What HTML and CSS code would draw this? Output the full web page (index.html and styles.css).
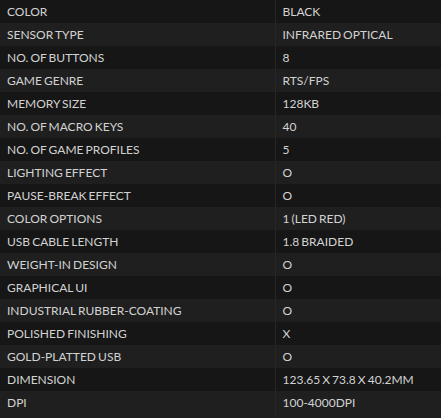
FILE: index.html
```html
<!DOCTYPE html>
<html>
<head>
    <title>Specifications</title>
    <link rel="stylesheet" href="styles.css">
</head>
<body>
    <table class="specs">
        <tr><td>Color</td><td>Black</td></tr>
        <tr><td>Sensor type</td><td>Infrared optical</td></tr>
        <tr><td>No. of buttons</td><td>8</td></tr>
        <tr><td>Game genre</td><td>RTS/FPS</td></tr>
        <tr><td>Memory size</td><td>128KB</td></tr>
        <tr><td>No. of macro keys</td><td>40</td></tr>
        <tr><td>No. of game profiles</td><td>5</td></tr>
        <tr><td>Lighting effect</td><td>O</td></tr>
        <tr><td>Pause-break effect</td><td>O</td></tr>
        <tr><td>Color options</td><td>1 (LED red)</td></tr>
        <tr><td>USB cable length</td><td>1.8 braided</td></tr>
        <tr><td>Weight-in design</td><td>O</td></tr>
        <tr><td>Graphical UI</td><td>O</td></tr>
        <tr><td>Industrial rubber-coating</td><td>O</td></tr>
        <tr><td>Polished finishing</td><td>X</td></tr>
        <tr><td>Gold-platted USB</td><td>O</td></tr>
        <tr><td>Dimension</td><td>123.65 x 73.8 x 40.2mm</td></tr>
        <tr><td>DPI</td><td>100-4000DPI</td></tr>
    </table>
</body>
</html>
```
FILE: styles.css
```css
html, body {margin: 0; padding: 0;}

body
{
    background: #161616;
    font-family: Lato, "Open Sans", sans-serif;
}

.specs
{
    width: 441px;
    border-collapse: collapse;
}

.specs td
{
    height: 23px;
    padding: 0 7px;
    font-size: 12px;
    word-spacing: -1px;
    color: #d2d2d2;
    text-transform: uppercase;
    white-space: nowrap;
    box-sizing: border-box;
}

.specs td:first-child {width: 275px;}
.specs td + td {border-left: 1px solid #262626;}

.specs tr:nth-child(odd) {background: #161616;}
.specs tr:nth-child(even) {background: #1f1f1f;}
.specs tr:last-child td {height: 27px; padding-bottom: 4px;}
```
